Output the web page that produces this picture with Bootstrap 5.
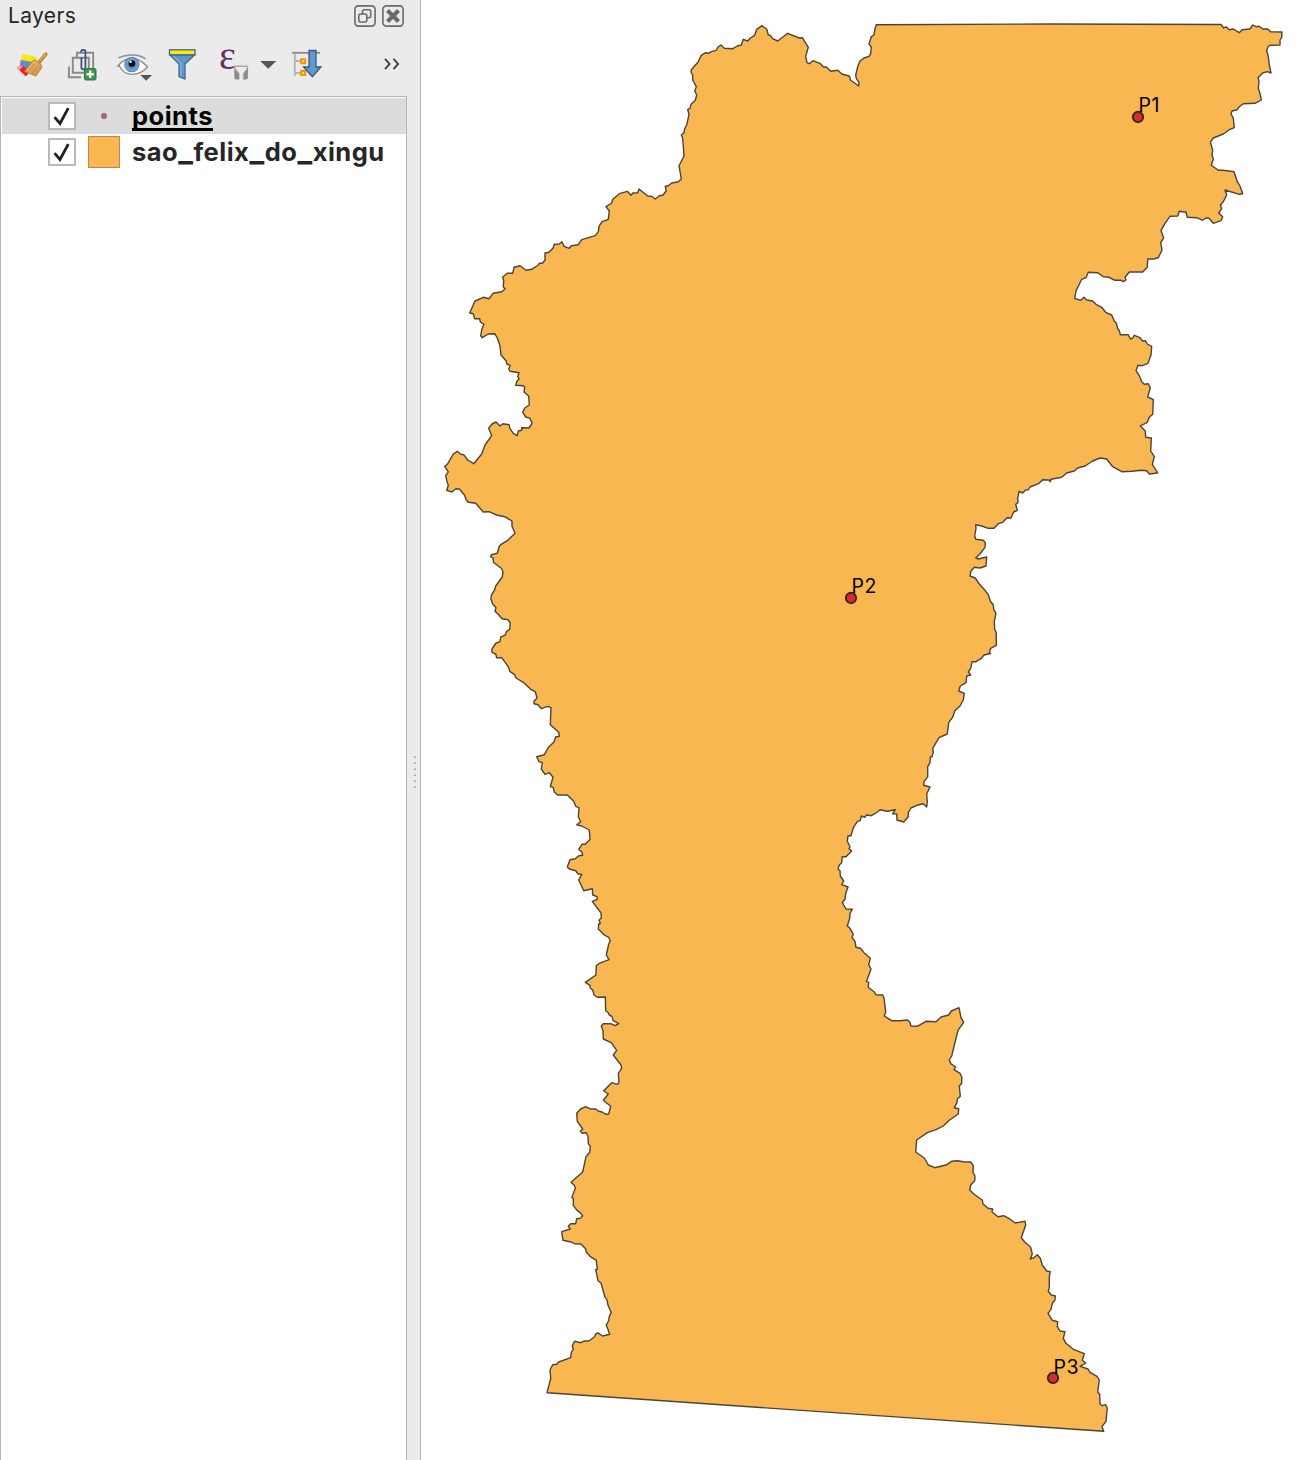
<!DOCTYPE html>
<html lang="en">
<head>
<meta charset="utf-8">
<title>Layers</title>
<link href="https://cdn.jsdelivr.net/npm/bootstrap@5.3.0/dist/css/bootstrap.min.css" rel="stylesheet">
<style>
  body { font-family: Inter, "Liberation Sans", sans-serif; background: #fff; color: #262626; }
  .app { height: 1460px; width: 1296px; }
  .dock { width: 421px; background: #ebebeb; border-right: 1px solid #b5b5b5; }
  .dock-head { height: 32px; padding: 0 16px 0 8px; }
  .dock-title { font-size: 21px; line-height: 30px; letter-spacing: .35px; }
  .head-btns { gap: 6px; margin-top: -1px; }
  .tools { height: 64px; padding: 12px 20px 0 7px; }
  .tools svg { height: 40px; overflow: visible; }
  .tree { width: 407px; background: #fff; border: solid #b5b5b5; border-width: 1px 1px 0 1px; padding-top: 1px; }
  .layer { height: 36px; padding-left: 46px; margin-left: 1px; }
  .layer.active { background: #dcdcdc; color: #000; }
  .check { width: 28px; height: 28px; border: 2px solid #bababa; background: #fff; }
  .symbol { width: 32px; height: 32px; margin: 0 12px; }
  .swatch { background: #f8b751; border: 1px solid #b78c4b; }
  .layer-name { font-size: 25.5px; font-weight: 700; line-height: 36px; white-space: nowrap; letter-spacing: .5px; }
  .layer-name .us { font-size: 31px; line-height: 0; }
  .active .layer-name { text-decoration: underline; text-decoration-thickness: 3px; text-underline-offset: 3px; text-decoration-skip-ink: none; }
  .splitter { width: 13px; padding-top: 659px; }
  .map text { font-size: 19.5px; letter-spacing: .6px; font-family: Inter, "Liberation Sans", sans-serif; fill: #000; }
</style>
</head>
<body>
<div class="app d-flex overflow-hidden">
  <aside class="dock d-flex flex-column flex-shrink-0">
    <header class="dock-head d-flex align-items-center justify-content-between">
      <span class="dock-title">Layers</span>
      <div class="head-btns d-flex">
        <svg width="22" height="22" viewBox="0 0 22 22" fill="none" stroke="#6b6a66" stroke-width="1.6"><rect x=".9" y=".9" width="20.2" height="20.2" rx="3.5"/><path d="M8.5 9V6.500q0-1.700 1.700-1.700H15q1.700 0 1.700 1.700V11q0 1.700-1.700 1.700h-2"/><rect x="4.800" y="9" width="8" height="8" rx="1.700"/></svg>
        <svg width="22" height="22" viewBox="0 0 22 22" fill="none" stroke="#6b6a66"><rect x=".9" y=".9" width="20.2" height="20.2" rx="3.500" stroke-width="1.600"/><path d="M5.500 5.500l11 11M16.500 5.500l-11 11" stroke-width="4.200"/></svg>
      </div>
    </header>
    <div class="tools d-flex align-items-start">
      <svg width="50" viewBox="0 0 50 40">
        <defs><linearGradient id="bristle" x1="0" y1="0" x2="1" y2="1"><stop offset="0" stop-color="#f0c47c"/><stop offset="1" stop-color="#c58a35"/></linearGradient></defs>
        <path d="M15.500 10L30 13l-2 7-14.500-3z" fill="#fbe80e"/><path d="M13.500 16L26 18l-4 9-9-3.500z" fill="#5b8fcd"/><path d="M10 24l3-2.500 11 4-5 7z" fill="#fb1c1c"/><path d="M10 24l3-2.500 3 1-4 4z" fill="#f89a94"/>
        <path d="M31 19.500l7.800-9.300" stroke="#b77a26" stroke-width="3.600" stroke-linecap="round"/><path d="M31 19l7.500-8.800" stroke="#e3a64e" stroke-width="1.800" stroke-linecap="round"/>
        <path d="M26 16.500q1.500-1 3 0l5 4q1.500 1.500.5 3.500L29 32l-11.500-4.500z" fill="url(#bristle)" stroke="#b07a30" stroke-width=".8"/><path d="M21 28l6.500-8M25 30l5-7.500" stroke="#b9823a" stroke-width=".8"/>
      </svg>
      <svg width="50" viewBox="0 0 50 40" fill="none">
        <g stroke="#8b8b83" stroke-width="1.900"><path d="M20 13V8.800h16.200V24M11.900 22.500v10.700H24"/><path d="M15.800 13.800h16v15h-16z"/></g>
        <path d="M24.200 8.500V7.300q0-1.500 2.100-1.500t2.100 1.500v16.500q0 1.500-2 1.500t-2-1.500V13.500" stroke="#31527c" stroke-width="1.700"/>
        <rect x="27.500" y="24.500" width="11.500" height="11.500" rx="1.500" fill="#419350" stroke="#2c7a3c"/><path d="M33.200 26.500v7.500M29.500 30.200H37" stroke="#fff" stroke-width="2.400"/>
      </svg>
      <svg width="50" viewBox="0 0 50 40" fill="none">
        <defs><radialGradient id="iris"><stop offset="0" stop-color="#2d5f9d"/><stop offset=".8" stop-color="#78a7da"/><stop offset="1" stop-color="#3a6298"/></radialGradient></defs>
        <path d="M10.800 22Q17 14.500 25 14.500T40.500 23Q34 30.300 25 30.300 16 30 12.500 22z" fill="#fff" stroke="#8d8d8d" stroke-width="1.300"/>
        <path d="M11.300 13.800Q18 10.800 25.500 11t13.200 3.800" stroke="#8d8d8d" stroke-width="1.400"/>
        <circle cx="24.800" cy="20.600" r="7.600" fill="url(#iris)"/><circle cx="24.900" cy="19.500" r="3.300" fill="#080808"/><circle cx="23.600" cy="17.800" r="1.200" fill="#fff"/>
        <path d="M33.300 31H45l-5.800 5.700z" fill="#555"/>
      </svg>
      <svg width="50" viewBox="0 0 50 40">
        <path d="M13 11L22 20v12.600l6 2.400V20l9.500-9z" fill="#6294c8" stroke="#3c6490" stroke-width="1.200"/><path d="M16 11.500l8 8v13" fill="none" stroke="#82aeda" stroke-width="1.500"/>
        <rect x="12.500" y="5.800" width="25.500" height="5" fill="#fbed0c" stroke="#3c6490" stroke-width="1.300"/>
      </svg>
      <svg width="50" viewBox="0 0 50 40">
        <text x="12" y="25" font-family="Liberation Serif, serif" font-size="40" fill="#673069">ε</text>
        <path d="M28 25v-2.700h12.500V25" fill="none" stroke="#aaa" stroke-width="1.400"/><path d="M27.300 24l4.700 5.500v6h-3q-1.700 0-1.700-1.700zM40.900 24l-4.700 5.500v6h3q1.700 0 1.700-1.700z" fill="#8c8c86"/><path d="M28.500 23.500h11.500l-4.200 6v6h-3.500v-6z" fill="#ededed"/><path d="M28.500 24l4 5.500v6M40 24l-4 5.500v6" fill="none" stroke="#c4c4c4"/>
      </svg>
      <svg width="22" viewBox="0 0 22 40"><path d="M3.200 17h16l-8 7.800z" fill="#555"/></svg>
      <svg class="ms-1" width="50" viewBox="1 0 50 40">
        <path d="M10 8.800h28" stroke="#8b8b8b" stroke-width="1.900"/><path d="M12.800 9.500V32M12.800 17h6M12.800 29h6" stroke="#b4b4b4" stroke-width="1.900" fill="none"/>
        <path d="M19.200 15.200h4v4h-4zM19.200 27h4v4h-4z" fill="#fce94f" stroke="#ff8e00" stroke-width="2"/>
        <path d="M27 6.500h7v16.500h5l-8.600 9.800-8.900-9.800H27z" fill="#6498cc" stroke="#315a83" stroke-width="1.300"/>
      </svg>
      <svg class="ms-auto" width="17" viewBox="0 0 17 40"><path d="M2 14.800l4.600 5.100L2 25.100M10.500 14.800l4.600 5.100-4.600 5.200" fill="none" stroke="#404040" stroke-width="1.900"/></svg>
    </div>
    <div class="d-flex flex-grow-1">
      <div class="tree">
        <div class="layer active d-flex align-items-center">
          <span class="check d-flex"><svg width="24" height="24" viewBox="0 0 24 24"><path d="M4.500 13.200l5.500 6.300 8.300-15.300" fill="none" stroke="#202020" stroke-width="2.800"/></svg></span>
          <svg class="symbol" viewBox="0 0 32 32"><circle cx="16" cy="16" r="2.700" fill="#b5606c" stroke="#8d6a70" stroke-width=".8"/></svg>
          <span class="layer-name">points</span>
        </div>
        <div class="layer d-flex align-items-center">
          <span class="check d-flex"><svg width="24" height="24" viewBox="0 0 24 24"><path d="M4.500 13.200l5.500 6.300 8.300-15.300" fill="none" stroke="#202020" stroke-width="2.800"/></svg></span>
          <span class="symbol swatch"></span>
          <span class="layer-name">sao<span class="us">_</span>felix<span class="us">_</span>do<span class="us">_</span>xingu</span>
        </div>
      </div>
      <div class="splitter"><svg class="d-block" width="13" height="34" viewBox="0 0 13 34"><path d="M8 1.500v32" stroke="#a8a8a8" stroke-width="2" stroke-dasharray="1.500 4.500"/></svg></div>
    </div>
  </aside>
  <main class="flex-grow-1">
    <svg class="map d-block" width="875" height="1460" viewBox="421 0 875 1460">
      <path fill="#f8b751" stroke="#4b4438" stroke-width="1.400" stroke-linejoin="round" d="M876.300 24.700L1050 24 1221 24.500 1223.700 28 1226 26.700 1229.300 29.700 1233.300 29 1239.300 32.700 1242 29.700 1250 29 1252.700 25 1256 26.700 1259 26.300 1263.300 29.300 1267.300 28.700 1270.700 31.700 1282 32 1281.700 37.300 1280 40 1280 45 1270 45.300 1268 46.700 1266.700 50.700 1268.300 56.700 1269.300 65 1271 73 1267.300 71.700 1262.700 73 1258 77.700 1259 81.700 1258.300 88.300 1260 93.300 1261.300 100 1255 103.300 1243.300 103.700 1239.300 106.700 1237.300 109.700 1232 111 1231 113.700 1233.300 118.300 1234.300 127.700 1230 129.300 1223.300 134 1213.300 138 1210.300 142.300 1212.700 150 1212 155 1213.300 159 1211.300 165.300 1218.300 170.300 1223.300 170.300 1234 171.700 1237.300 181.700 1240 186 1242.700 193.700 1239.300 194.300 1225 190 1226.700 195 1223.300 201.700 1220.300 205 1221.700 208.700 1218.700 213 1222.700 216.700 1221 220.700 1213.300 223.300 1208.700 218 1206 218 1202.700 220.300 1196.700 217.700 1187.300 217.300 1186 212.300 1179.300 211.300 1177.700 216 1170 216.300 1165 223.300 1161 230.700 1163.700 237.700 1160.700 242.700 1162 250 1158.300 257.700 1153.300 259 1147.700 259 1147.300 267.300 1142.700 272 1129.300 272 1125 277.300 1126 280 1123.300 281.700 1121 280.300 1115 280.300 1108.300 277 1103.300 276.700 1097.700 272.700 1088.300 272.300 1086 277.700 1081.700 279.300 1076 291 1074.700 298.300 1080.700 300.300 1084 297.300 1086.700 300 1092.700 301 1096 304.300 1101.700 307.300 1105.700 312.300 1111.700 315 1114.300 321 1116.300 323 1117.700 328.700 1119.300 330.700 1120.300 334.700 1128.300 334.700 1130.300 339 1132.700 338 1134.300 335.300 1140 337.700 1142.700 341 1145.300 340.700 1147.300 344 1151.700 346.300 1151 355 1148 363.300 1142 365.700 1138 365.300 1136 370.700 1139.300 375.700 1141.700 381.700 1144.300 384.300 1148 383.700 1150.300 387.700 1147.700 397 1153.300 399.700 1152.700 414.300 1149.300 417.300 1147.300 422.300 1140.300 426 1145.300 431 1145.700 437.300 1151.300 438 1150.700 451 1154.300 456.700 1152.300 464.300 1157.700 473 1149.300 474 1146.700 470.700 1141.700 470.300 1131.700 471.300 1121.700 471.700 1112.700 466.700 1106.700 459 1100 458 1092.700 461 1085 466 1077.700 468 1074.300 471 1066.700 473 1061.700 477.300 1051 479.300 1050.300 481.700 1049 480 1042.700 479.700 1039 483.300 1030 487 1028.300 489.700 1025.700 490 1022.700 493 1019 491.300 1017.700 498.300 1018 502.700 1015.700 504.300 1017.300 510.300 1013.700 512 1011 518 1007 517.700 1002.700 522.300 998.300 523.700 994 528.300 988.300 528.300 981.700 526 975.700 524.700 976 528.300 974.700 536 975.700 539.300 983.300 540.300 985.300 542.700 985 547.300 980 554 975.700 557.700 978.300 559 986.700 557 986 566 980 568 974.300 567.300 971 571 970 576 975.300 578 979.300 584 985 590.300 988.300 594.700 990.300 601 993.300 605 993.700 609.300 996 613.300 994.300 621.700 994.700 629.300 996.300 632.700 996.300 645.300 990.700 648.300 989.300 652.700 990.700 653.500 984 655 981 658.700 976 661.700 972 661.700 970.700 668.300 968.300 672 970.700 675 966.700 676 966 682.700 960.300 686 958.700 691 964.300 693.300 963.300 700 960 706 954.700 711 953 716.700 948.700 722.700 947.300 734 939 737.700 932.700 748.300 933.300 752.300 932 756.700 930.300 757 930 762.700 927.700 766.700 927.700 776.700 924 781.700 923.700 785.300 930 787 926.700 794 927.300 801.700 926.700 807 923.300 803.700 916.700 805.300 911 808 908.300 812.300 908.300 816.700 903.700 822 897 820 896.700 814 892.700 813.700 895.300 809.700 887.300 811.300 880 809.700 876 813 871.300 815.700 866.700 815 864.700 817.300 861.300 816 860.300 820.300 857.300 821.700 853.300 827.700 851 835.700 848 835.700 847.300 841.300 850 846.700 849 848.700 851.700 851 846 856.700 842.300 856.700 841.700 862.700 839.300 865 838 869 840 870.700 840.300 876 843.700 881 841.700 884.700 848 887 845.700 893.300 845 899.300 842.300 902.700 846 909 852.300 909.300 850 913.300 849.700 918.300 847.300 926 850 928.300 853.300 934.300 852 937.300 855 941.300 856 947.300 860.700 948.300 864 952.700 870.300 958.300 868.700 964.700 871 969 867.300 979.300 866.300 981.300 868.700 982.300 868.300 987.300 874 991.700 876 994.700 882.700 995 884 998.300 885.700 1011.700 884.300 1016 891.700 1020.700 900 1020.700 907.300 1020 909.700 1021.700 911 1026 917.300 1026.300 926 1021.300 936 1021.700 941 1017 948.700 1015 951.300 1011 959 1007.700 961 1017.700 963.700 1022.300 958 1030.300 951.700 1056 949.300 1060 950.700 1063.700 955.700 1067 954 1069.700 960 1073.300 961.700 1076.700 961.700 1083.300 959.300 1086 960.300 1096.300 957.300 1099 957 1102.700 954.300 1107.700 958.700 1108.700 958.300 1114 949.300 1120.300 943.300 1126 936 1129.700 927.300 1132.700 916.700 1140 915.700 1152 924.300 1158 928.300 1165 935 1167.700 946.700 1164.700 951.700 1161.300 957.300 1160.700 963.300 1161.700 970.700 1162 973.300 1165.700 973 1172.700 975 1176 974.700 1180.700 970.700 1185 969.700 1190 975 1195 982.300 1200 983 1204 988 1208.300 992.700 1209 992 1212 998 1216.700 1003.700 1215.700 1009.300 1218.700 1015.300 1223 1025 1221.300 1025.700 1225 1021.300 1237.700 1024.700 1242 1030.700 1247.300 1032.300 1254 1030.300 1259 1034 1257.700 1037.300 1254.700 1040.300 1258.300 1042.300 1265 1046.700 1271 1050.300 1271.700 1049.300 1276.700 1049.300 1286.700 1048.300 1291.300 1051.300 1295 1055.300 1296 1055 1300 1052.300 1303.300 1051 1309.300 1048 1313.300 1052.300 1320.300 1057.700 1321.700 1057.300 1326.700 1060 1331 1065 1331.700 1063.300 1338.300 1066 1343.300 1073.300 1349.300 1084.300 1353.700 1082.300 1360.300 1085.700 1363 1080 1366.300 1088 1369 1090 1372.300 1097 1376.300 1099.300 1380 1097.700 1392.300 1099.700 1394.300 1100 1404 1102.300 1405.700 1105.700 1404.700 1107.300 1408 1106 1421.300 1102 1426.700 1103.700 1431.300 547 1392.700 550.700 1378.300 550 1370 552.700 1364.700 556.700 1364.300 558.700 1362 570.700 1357.700 571.300 1352.300 573.300 1349 572.300 1345.700 574.700 1341.300 580.700 1342.700 583.300 1341.300 589.300 1340.700 594.300 1337 596.300 1333.300 598.700 1333.300 602.700 1336 609.700 1334.300 606.300 1325 608.700 1320.700 609.300 1316.300 611.300 1312.700 608 1305.300 607 1300 604.700 1296.300 601 1283 598 1280.700 595.700 1269.700 597.300 1269.300 596.300 1260.300 590 1256.300 586.300 1252 585.700 1249 581 1244 574.700 1243.700 570 1241.700 563 1240.300 561.700 1231.700 570.300 1229 568.300 1226.300 570.700 1223.700 575.700 1223.700 576.700 1218.700 580 1218.300 582.700 1216 580 1212.300 577 1210.300 573.300 1205.300 573.300 1199 572 1197 575.300 1188.300 574.300 1185.300 571 1182.300 582.700 1172 586 1156.700 589.700 1152.300 590.300 1146.700 588.300 1143.300 588 1136 586 1132.700 582.300 1133.300 580.300 1131.300 582.700 1129 577.300 1121.300 576.700 1113.300 580.700 1109 585.700 1106.700 589.700 1108.700 595.700 1109 598.700 1111.300 602 1112 606 1114.300 608.700 1114 610.700 1106.300 603.300 1100.300 608.300 1094 603.700 1090.700 611.700 1082.700 617.300 1084.300 619 1082.700 618.300 1073.300 621.700 1068.300 621 1065 613.300 1055 616.700 1050.300 611.300 1042.700 603.300 1039 603 1030.700 601.300 1026 603.300 1023.700 610.700 1023.700 615.300 1025.700 618.700 1023.700 613 1020.300 612 1016.300 609.300 1015 608.300 1012.700 605.700 1010.700 605.300 997 597.300 997.300 594 995 592.700 990 590.300 988.300 590 985.300 585.300 982.300 596 975 596.300 965.700 599.300 963.300 609 959.700 606.300 955 608.700 944 610.300 940.700 608.700 937.300 604.300 935 598.300 929 598.700 924 600.300 923.300 599 920.300 601.300 918 601 913 592.300 901.300 597.300 899.300 597 896.700 592.700 895 592.300 888.700 583.700 890.700 578.700 880 581.700 874.300 578 874 575.700 870.700 569.300 869 567.300 867 570 859.700 575.300 858.700 578.700 855.700 582.700 855.300 582 852.300 578.700 849.300 582 844.300 585.300 844.300 590 839.300 589.300 830 581.700 826 576.700 824.700 580.700 821.700 578.300 816.700 579 807.700 575.700 806.300 573.700 801.300 567.300 795 557.700 795 554.300 791.700 553 787.300 550.300 786.500 553 777.300 549.300 772.700 545 774.300 541.300 769 542.300 762.700 539 761.700 536.700 756.700 544.300 754.700 548.700 747 554 742 555.700 737 559.300 736.300 558.700 732.300 550.300 724.700 551 707.700 547.700 706.300 541.300 708.700 538 704.700 534 703.700 534 701.300 537 698 535.300 691.700 530.700 689.300 523.300 682.300 516 678 514.700 674.700 509.700 671.300 508.700 667.300 501.700 657.700 496.700 657.700 495.700 654 492 652.300 491.700 649.300 496 643 500 641.700 500.700 637 505 635.300 506.700 631.300 509.700 629.300 510.300 623 508 619.700 502 618.700 498.700 614.700 495 611.300 496 607.700 492.700 604 491 599.300 491.300 595.300 494.700 589.700 495.700 586 502.300 577 503 571.700 501.300 568.300 493.300 562.300 493.300 558.300 490.700 556.700 491.300 554.700 497.300 553.300 499.300 546.300 500.700 544.700 507.300 540.700 515 533.300 512 526.300 512 521 504.700 516.700 496.700 515 489 511.700 483.300 512 475.700 503.300 468.300 502.300 466.300 500 464.300 494.700 459.300 489 456 488.700 451.700 492 446.700 490.300 448.300 485.300 447 481.700 445.700 475.700 448.300 471.800 444.700 466.300 447.300 464.300 453.300 454 457.300 451.300 460.700 454.300 463.700 454.700 467.700 460 473.700 463.700 481.700 454 485 445 491.700 435.700 488.700 428.300 492 424 496 422 500 426 503 423.700 509 424.700 510 428.700 513.300 433.300 517.300 435.700 518.300 431 521.700 430.300 521.700 427.700 529 428 532 423.300 530 418.300 525.700 417 522.700 412.300 524.700 408 529.300 405 528.700 396 524 392 524.700 387.300 523 385.700 515.700 385.300 516.700 381.700 519 378.700 517.700 376.700 519 372.700 510 371.300 508.700 368.700 510.300 365.300 506.700 364 506.300 361 501 355 500 346 497.300 338 494.700 333.700 488.300 334 482.300 337.700 480.700 335.700 482 328.700 484 324.300 480.300 322 479.700 318.700 474.700 318.700 473.300 313.700 469.700 313 475 301 483.300 297.300 489.300 298.700 493 293.300 501.700 291.700 505 289 503.300 286.700 503.700 280.700 502.700 277 507.300 273.300 512.700 273.300 514 267.300 520 265.700 526 270.300 531.700 269.300 538.300 265 539.300 263.300 542.300 263.300 545 260 545 253 549 252.300 553.300 247.700 554.300 244.300 559.300 244 562 241.700 564 246.300 569.300 248.300 571.300 245.700 578.300 244.700 581.700 239.700 595.300 235.700 598.300 231.700 599 226.300 602 221.700 608.300 219.300 609.300 210.700 606 206.700 611.700 203 613 199 619.300 193.700 627.300 191.300 631 195.300 633 193 637.700 192.700 639 189 647.700 196 651.700 196.300 655.300 199 659.300 195.700 663 195 666.300 190.700 665.300 186.300 668.300 185.700 671.700 183 678.300 181.800 681.300 179 679 165.700 684 156 682.700 138.300 681.300 135 684 132.700 684.700 128.700 686.700 125 689 114.300 687.700 109.700 690 108.300 691 104.300 695.300 100.300 696.700 95 694.700 91 696.300 86.700 692.700 80 692.700 75.300 691 72 691.700 69.300 698.300 61.700 701 55.700 705.700 52.700 708.700 53.300 711.300 51.700 716.300 50.300 718 47 721 45 724.300 48.300 732.700 48.700 737.300 46 741.300 45 743.300 39.300 747.700 41 750.300 38 754.700 35.300 756.700 29.300 762 25.700 766.700 29 768.300 35 770.300 35.300 772.700 38.700 777.700 41 787.700 33.300 799.300 38 802.300 37.700 808.300 47.300 805.700 56.300 807 62.700 809.300 63.700 813 60.700 820 63.300 823 66.700 826.700 67.300 830.700 71.300 837.700 70.300 842.300 74.300 849.300 76 850.700 80.300 858.700 86 859 82.700 856.300 78.300 855.700 75 857.700 66.700 860 61 864 58 869 56.300 870.700 53.700 871.300 46.700 869 44.300 871.300 36.700 874 35 874.700 30z"/>
      <g fill="#d62b31" stroke="#3d2420" stroke-width="1.900"><circle cx="1138" cy="117" r="5.200"/><circle cx="851" cy="598" r="5.200"/><circle cx="1053" cy="1378" r="5.200"/></g>
      <text x="1138.400" y="112">P1</text><text x="851.400" y="593">P2</text><text x="1053.400" y="1373.500">P3</text>
    </svg>
  </main>
</div>
<script src="https://cdn.jsdelivr.net/npm/bootstrap@5.3.0/dist/js/bootstrap.bundle.min.js"></script>
</body>
</html>
